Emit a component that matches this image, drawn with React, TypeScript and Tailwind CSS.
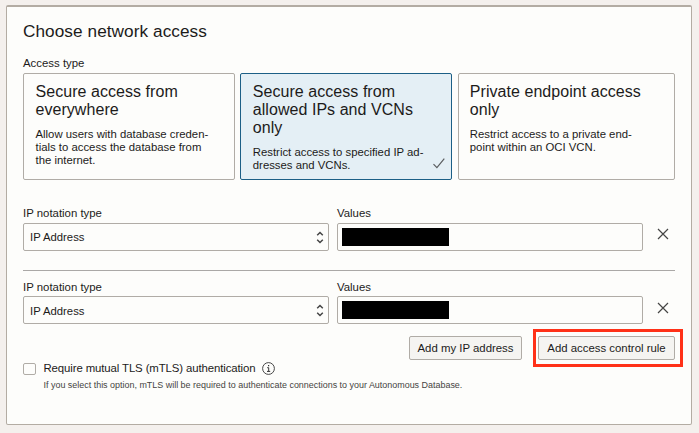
import type { ReactNode } from "react";

type AccessOption = {
  title: string[];
  body: string[];
  width: string;
  selected?: boolean;
};

const options: AccessOption[] = [
  {
    title: ["Secure access from", "everywhere"],
    body: ["Allow users with database creden-", "tials to access the database from", "the internet."],
    width: "w-[212px] pl-[11.5px]",
  },
  {
    title: ["Secure access from", "allowed IPs and VCNs", "only"],
    body: ["Restrict access to specified IP ad-", "dresses and VCNs."],
    width: "w-[212px] pl-[11.8px]",
    selected: true,
  },
  {
    title: ["Private endpoint access", "only"],
    body: ["Restrict access to a private end-", "point within an OCI VCN."],
    width: "w-[217px] pl-[10.8px]",
  },
];

function OptionCard({ title, body, width, selected }: AccessOption) {
  return (
    <div
      className={`relative h-[107px] rounded-[2px] border pt-[9px] whitespace-nowrap ${width} ${
        selected ? "border-[#1c5f86] bg-[#e4eff5]" : "border-[#b0aca6]"
      }`}
    >
      <div className="text-[16px] leading-[18px] tracking-[0.05px]">
        {title.map((line) => (
          <div key={line}>{line}</div>
        ))}
      </div>
      <div className="mt-[9px] text-[11.35px] leading-[13px]">
        {body.map((line) => (
          <div key={line}>{line}</div>
        ))}
      </div>
      {selected && (
        <svg className="absolute right-[5.5px] bottom-[9px]" width="14" height="13" viewBox="0 0 14 13" fill="none" stroke="#5a5d5f" strokeWidth="1.2">
          <path d="M1.5 7.2 4.9 10.6 12.3 1.6" />
        </svg>
      )}
    </div>
  );
}

function Label({ children, className = "h-[16px]" }: { children: ReactNode; className?: string }) {
  return <div className={`text-[11.4px] leading-[13px] ${className}`}>{children}</div>;
}

function RuleRow({ labelHeight, valuePadding = "pt-0" }: { labelHeight: string; valuePadding?: string }) {
  return (
    <div className="flex gap-2">
      <div className="w-[306px]">
        <Label className={labelHeight}>IP notation type</Label>
        <div className="flex h-[28px] items-center justify-between rounded-[2px] border border-[#b0aca6] pr-[4px] pl-[6px] text-[11.3px]">
          <span className={valuePadding}>IP Address</span>
          <svg width="8" height="13" viewBox="0 0 8 13" fill="none" stroke="#444" strokeWidth="1.5">
            <path d="M1.2 4.2 4 1.5 6.8 4.2M1.2 8.8 4 11.5 6.8 8.8" />
          </svg>
        </div>
      </div>
      <div className="w-[306px]">
        <Label className={labelHeight}>Values</Label>
        <div className="flex h-[28px] items-center rounded-[2px] border border-[#b0aca6] pl-[4px]">
          <div className="h-[18px] w-[107px] bg-black" />
        </div>
      </div>
      <svg className="mt-[21px] ml-[6px]" width="12" height="12" viewBox="0 0 12 12" stroke="#454545" strokeWidth="1.2">
        <path d="M1 1 11 11M11 1 1 11" />
      </svg>
    </div>
  );
}

function Button({ children, className }: { children: ReactNode; className: string }) {
  return (
    <button className={`block h-[24px] rounded-[2px] border border-[#b0aca6] bg-[#f5f4f1] text-center text-[11.4px] leading-[22px] whitespace-nowrap ${className}`}>
      {children}
    </button>
  );
}

export default function App() {
  return (
    <div className="h-[433px] w-[699px] overflow-hidden bg-[#f4f0ed] pt-[5px] pl-[6px] font-['Liberation_Sans',Arial,sans-serif] text-[#1c1b1a]">
      <div className="h-[420px] w-[686px] rounded-[2px] border border-t-2 border-[#b3aca3] bg-[#fdfdfb] px-[16px] pt-[14px]">
        <h1 className="h-[36px] text-[17.2px] leading-[20px] tracking-[0.07px]">Choose network access</h1>
        <Label>Access type</Label>
        <div className="flex">
          <OptionCard {...options[0]} />
          <div className="w-[5px]" />
          <OptionCard {...options[1]} />
          <div className="w-[6px]" />
          <OptionCard {...options[2]} />
        </div>
        <div className="mt-[27px]">
          <RuleRow labelHeight="h-[16px]" />
        </div>
        <div className="mt-[19px] h-px w-[652px] bg-[#aaa8a6]" />
        <div className="mt-[10px]">
          <RuleRow labelHeight="h-[15px]" valuePadding="pt-[2px]" />
        </div>
        <div className="mt-[12px] flex w-[652px] justify-end gap-[16px]">
          <Button className="w-[113px]">Add my IP address</Button>
          <div className="relative">
            <Button className="w-[137px]">Add access control rule</Button>
            <div className="absolute -top-[7px] -left-[5px] h-[38px] w-[150px] border-3 border-[#ff3118]" />
          </div>
        </div>
        <div className="mt-[2px] flex items-center">
          <div className="h-[12px] w-[13px] rounded-[2px] border border-[#b0aca6]" />
          <div className="ml-[7.5px] text-[11.4px] leading-[13px] tracking-[-0.11px]">Require mutual TLS (mTLS) authentication</div>
          <svg className="ml-[6.5px]" width="13" height="13" viewBox="0 0 13 13" fill="none" stroke="#333">
            <circle cx="6.5" cy="6.5" r="5.9" strokeWidth="0.9" />
            <path d="M5.2 5.7H6.7V9.3M5 9.4H8.2" />
            <path d="M6 3.7H7.2" strokeWidth="1.3" />
          </svg>
        </div>
        <div className="mt-[4px] ml-[20.5px] text-[8.95px] leading-[12px] whitespace-nowrap text-[#454442]">
          If you select this option, mTLS will be required to authenticate connections to your Autonomous Database.
        </div>
      </div>
    </div>
  );
}
